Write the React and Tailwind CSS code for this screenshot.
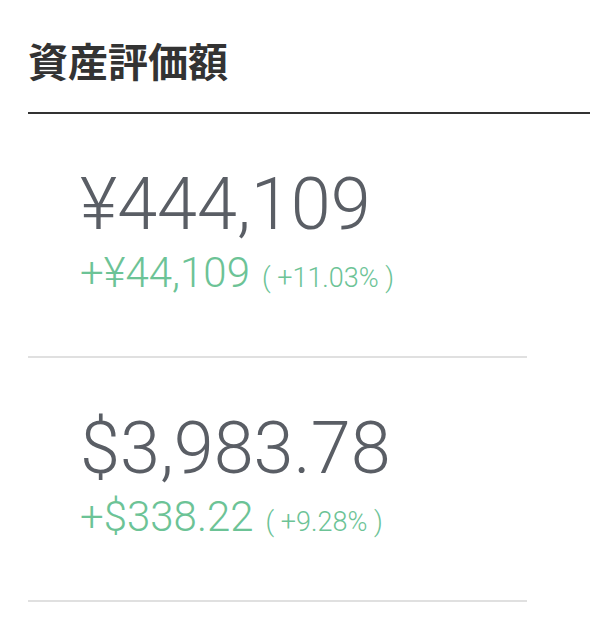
import React from 'react';

const assets = [
  { value: '¥444,109', diff: '+¥44,109', rate: '+11.03%' },
  { value: '$3,983.78', diff: '+$338.22', rate: '+9.28%' },
];

const AssetRow = ({ value, diff, rate }) => (
  <div className="w-[499px] border-b-2 border-[#e0e0e0] pl-[52px] pt-[55px] pb-[62px]">
    <div className="text-[72px] leading-[72px] font-light text-[#5a5e65]">{value}</div>
    <div className="mt-[11px] flex items-baseline text-[#6cc396]">
      <span className="text-[42px] leading-[42px] font-light">{diff}</span>
      <span className="ml-[12px] text-[27px] leading-[27px] font-light">( {rate} )</span>
    </div>
  </div>
);

export default function App() {
  return (
    <div className="min-h-[632px] bg-white pl-[28px] pt-[40px] font-['Roboto','Liberation_Sans',Arial,sans-serif]">
      {/* 見出し */}
      <h1 className="text-[40px] leading-[40px] font-bold text-[#333333] font-['Noto_Sans_CJK_JP',sans-serif]">
        資産評価額
      </h1>
      <div className="mt-[32px] h-[2px] bg-[#333333]" />

      {assets.map((a) => (
        <AssetRow key={a.value} {...a} />
      ))}
    </div>
  );
}
